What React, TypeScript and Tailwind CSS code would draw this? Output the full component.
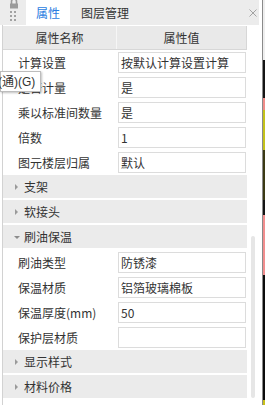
import React from "react";

type Row = { kind: "row"; label: string; value: string };
type Group = { kind: "group"; label: string; open?: boolean };
type Item = Row | Group;

const items: Item[] = [
	{ kind: "row", label: "计算设置", value: "按默认计算设置计算" },
	{ kind: "row", label: "是否计量", value: "是" },
	{ kind: "row", label: "乘以标准间数量", value: "是" },
	{ kind: "row", label: "倍数", value: "1" },
	{ kind: "row", label: "图元楼层归属", value: "默认" },
	{ kind: "group", label: "支架" },
	{ kind: "group", label: "软接头" },
	{ kind: "group", label: "刷油保温", open: true },
	{ kind: "row", label: "刷油类型", value: "防锈漆" },
	{ kind: "row", label: "保温材质", value: "铝箔玻璃棉板" },
	{ kind: "row", label: "保温厚度(mm)", value: "50" },
	{ kind: "row", label: "保护层材质", value: "" },
	{ kind: "group", label: "显示样式" },
	{ kind: "group", label: "材料价格" },
];

// bits of the app window behind the panel, on the far right
const strip = [
	{ h: 60, c: "bg-[#eeeeee]" },
	{ h: 38, c: "bg-[#151515]" },
	{ h: 12, c: "bg-[#f08c88]" },
	{ h: 40, c: "bg-[#c4c21a]" },
	{ h: 50, c: "bg-[#3b3a14]" },
	{ h: 15, c: "bg-[#141414]" },
	{ h: 60, c: "bg-[#f28e8e]" },
	{ h: 125, c: "bg-[#0c0c0c]" },
	{ h: 5, c: "bg-[#c8c01a]" },
];

function PropRow({ label, value }: { label: string; value: string }) {
	return (
		<div className="flex h-[25px] items-center">
			<div className="w-[115px] pl-[15px] whitespace-nowrap">{label}</div>
			<div className="flex h-[21px] w-[128px] items-center border border-[#dcdcdc] bg-white pl-[2px]">
				{value}
			</div>
		</div>
	);
}

function GroupRow({ label, open }: { label: string; open?: boolean }) {
	return (
		<div className="h-[25px] pb-[2px]">
			<div className="flex h-full items-center bg-[#ebebeb]">
				<div className="flex w-[21px] justify-center pl-[6px]">
					{open ? (
						<span className="mt-[1px] block h-0 w-0 border-x-[3px] border-t-[3px] border-x-transparent border-t-[#8c8c8c]" />
					) : (
						<span className="block h-0 w-0 border-y-[3px] border-l-[3px] border-y-transparent border-l-[#9a9a9a]" />
					)}
				</div>
				<span>{label}</span>
			</div>
		</div>
	);
}

export default function App() {
	return (
		<div className="relative flex h-[405px] w-[265px] overflow-hidden bg-white font-['Noto_Sans_CJK_SC',sans-serif] text-[12px] text-[#333]">
			<div className="flex w-[262px] flex-col">
				{/* tab bar */}
				<div className="flex h-[25px] w-[259px] shrink-0 items-stretch bg-[#ececec]">
					<div className="flex w-[26px] flex-col items-center">
						<svg width="12" height="10" viewBox="0 0 12 10" className="ml-[1px] mt-[-1px]">
							<path d="M3.5 5V2.5a2.5 2.5 0 0 1 5 0V5" fill="none" stroke="#9b9b9b" strokeWidth="1.6" />
							<rect x="2" y="4.5" width="8" height="5" fill="#9b9b9b" />
						</svg>
						<div className="mt-[2px] grid grid-cols-2 gap-x-[2px] gap-y-[2px]">
							{[0, 1, 2, 3, 4, 5].map((i) => (
								<span key={i} className="block h-[2px] w-[2px] bg-[#a2a2a2]" />
							))}
						</div>
					</div>
					<div className="flex w-[44px] items-center justify-center bg-white text-[#2a7de1]">属性</div>
					<div className="flex items-center pl-[11px]">图层管理</div>
					<div className="flex-1" />
					<div className="flex w-[26px] items-center pl-[16px]">
						<svg width="8" height="8" viewBox="0 0 8 8">
							<path d="M0.5 0.5L7.5 7.5M7.5 0.5L0.5 7.5" stroke="#a3a3a3" strokeWidth="1" />
						</svg>
					</div>
				</div>

				{/* body */}
				<div className="flex flex-1 pl-[2px]">
					<div className="w-[1px] bg-[#d2d2d2]" />
					<div className="w-[244px] pt-[1px]">
						<div className="flex h-[24px] border-b border-[#d7d7d7] bg-[#e9e9e9]">
							<div className="flex w-[114px] items-center justify-center border-r border-[#f6f6f6]">属性名称</div>
							<div className="flex flex-1 items-center justify-center border-r border-[#d7d7d7]">属性值</div>
						</div>
						{items.map((it, i) =>
							it.kind === "row" ? (
								<PropRow key={i} label={it.label} value={it.value} />
							) : (
								<GroupRow key={i} label={it.label} open={it.open} />
							)
						)}
					</div>
					<div className="flex w-[15px] flex-col pl-[4px] pt-[211px]">
						<div className="h-[162px] w-[4px] rounded-full bg-[#e6e6e6]" />
					</div>
				</div>
			</div>

			<div className="w-[1px] bg-[#8a8a8a]" />
			<div className="flex w-[2px] flex-col">
				{strip.map((s, i) => (
					<div key={i} className={s.c} style={{ height: s.h }} />
				))}
			</div>

			{/* shortcut tooltip from the menu behind, cut by the left edge */}
			<div className="absolute left-0 top-[71px] flex h-[21px] w-[41px] items-center border border-[#bdbdbd] bg-white font-['Liberation_Sans','Noto_Sans_CJK_SC',sans-serif] shadow-[1px_1px_2px_rgba(0,0,0,0.25)]">
				<span className="ml-[-3px] whitespace-nowrap">(通)(G)</span>
			</div>
		</div>
	);
}
